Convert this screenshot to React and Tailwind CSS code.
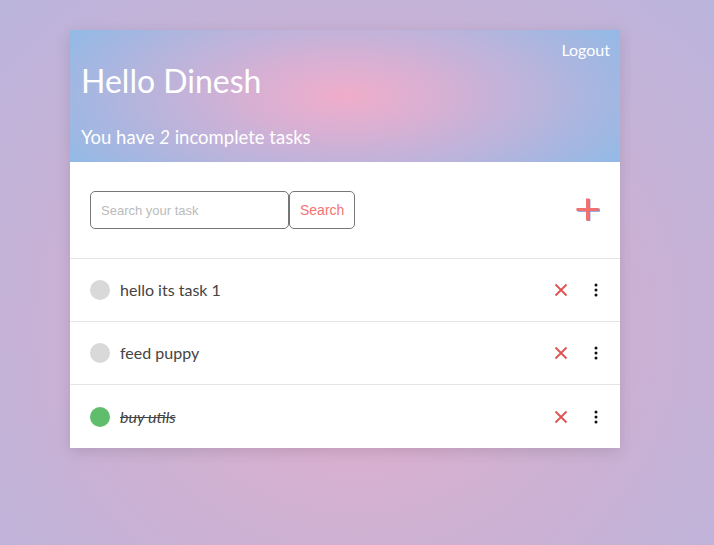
import React from "react";

const tasks = [
  { text: "hello its task 1", done: false },
  { text: "feed puppy", done: false },
  { text: "buy utils", done: true },
];

function Dots() {
  return (
    <svg width="4" height="14" viewBox="0 0 4 14">
      <circle cx="2" cy="2" r="1.5" fill="#111" />
      <circle cx="2" cy="7" r="1.5" fill="#111" />
      <circle cx="2" cy="12" r="1.5" fill="#111" />
    </svg>
  );
}

function Cross() {
  return (
    <svg width="14" height="14" viewBox="0 0 14 14">
      <path d="M1.5 1.5 L12.5 12.5 M12.5 1.5 L1.5 12.5" stroke="#e0524f" strokeWidth="1.8" strokeLinecap="butt" />
    </svg>
  );
}

function Plus() {
  return (
    <svg width="26" height="26" viewBox="0 0 26 26">
      <path d="M13.8 2 V24 M2.8 13.2 H24.8" stroke="#7b8fd6" strokeWidth="3.2" />
      <path d="M12.6 1.5 V23.5 M1.5 12.5 H23.5" stroke="#f2706e" strokeWidth="3.2" />
    </svg>
  );
}

export default function App() {
  return (
    <div
      className="min-h-screen w-full pt-[30px] pl-[70px]"
      style={{
        fontFamily: "Lato, 'Noto Sans', sans-serif",
        background:
          "radial-gradient(ellipse at 50% 60%, #e8afcb 0%, #cfb1d3 45%, #bab4dc 100%)",
      }}
    >
      <div className="w-[550px] bg-white shadow-[0_4px_14px_rgba(0,0,0,0.12)]">
        <div
          className="h-[132px] flex flex-col pl-[11px] pr-[10px] text-white"
          style={{
            background:
              "radial-gradient(ellipse 60% 100% at 50% 50%, #f0adca 0%, #d6b0d4 30%, #b8b4dc 60%, #8fbae7 100%)",
          }}
        >
          <div className="flex justify-end pt-[10px] text-[16px] leading-[20px]">Logout</div>
          <div className="text-[32px] leading-[40px] mt-[1px] font-normal">Hello Dinesh</div>
          <div className="text-[18.5px] leading-[22px] mt-[25px]">
            You have <span className="italic">2</span> incomplete tasks
          </div>
        </div>
        <div className="h-[97px] flex items-center justify-between pl-[20px] pr-[19px] border-b border-[#e4e4e4]">
          <div className="flex items-center">
            <input
              className="w-[199px] h-[38px] border border-[#777] rounded-[5px] px-[10px] text-[13px] outline-none placeholder:text-[#bbb]"
              style={{ fontFamily: "'Liberation Sans', Arial, sans-serif" }}
              placeholder="Search your task"
            />
            <button
              className="h-[38px] px-[10px] border border-[#777] rounded-[5px] text-[14px] text-[#f47373] bg-white"
              style={{ fontFamily: "'Liberation Sans', Arial, sans-serif" }}
            >
              Search
            </button>
          </div>
          <Plus />
        </div>
        {tasks.map((t, i) => (
          <div
            key={i}
            className={
              "h-[63px] flex items-center pl-[20px] pr-[22px] " +
              (i < tasks.length - 1 ? "border-b border-[#e4e4e4]" : "")
            }
          >
            <div
              className={
                "w-[20px] h-[20px] rounded-full " + (t.done ? "bg-[#5fbd6c]" : "bg-[#d9d9d9]")
              }
            />
            <div
              className={
                "ml-[10px] text-[16px] text-[#444] flex-1 " + (t.done ? "italic line-through" : "")
              }
            >
              {t.text}
            </div>
            <div className="flex items-center gap-[26px]">
              <Cross />
              <Dots />
            </div>
          </div>
        ))}
      </div>
    </div>
  );
}
